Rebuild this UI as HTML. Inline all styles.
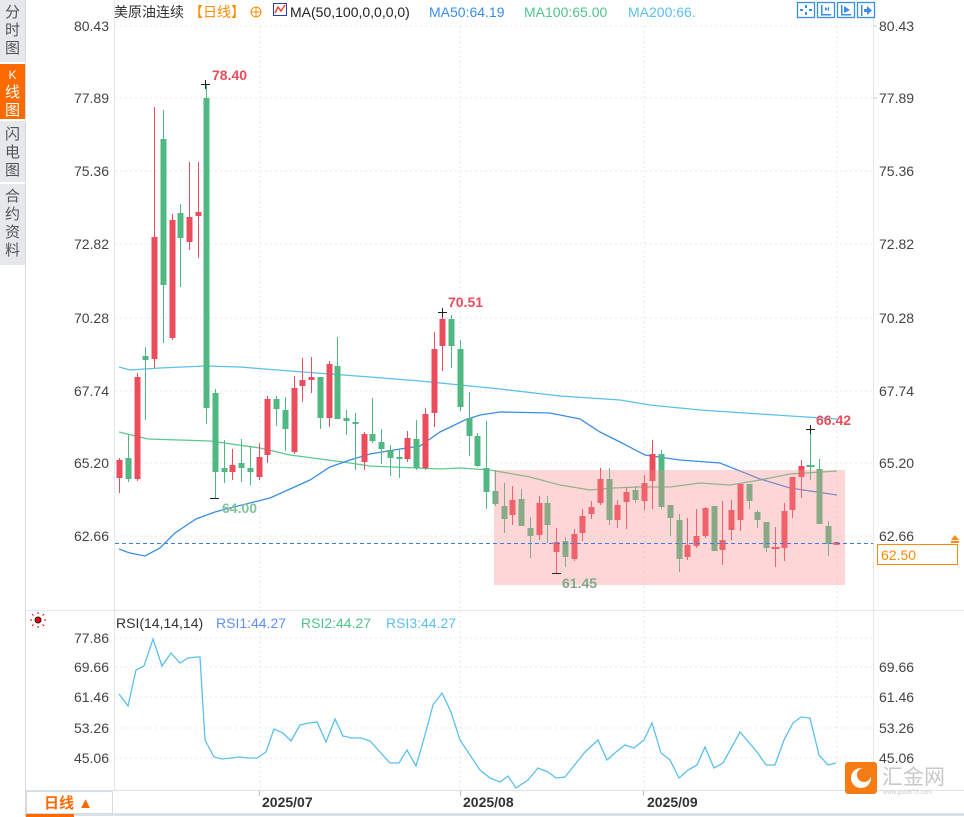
<!DOCTYPE html>
<html><head><meta charset="utf-8"><style>
html,body{margin:0;padding:0;background:#fff;width:964px;height:817px;overflow:hidden;font-family:"Liberation Sans","Noto Sans CJK SC",sans-serif}
.side{position:absolute;left:0;top:0;width:25px;height:817px;border-right:1px solid #d8dce2;background:#fff}
.tab{position:absolute;left:0;width:25px;background:#e6e8eb;color:#555;font-size:15px;line-height:18px;text-align:center;writing-mode:horizontal-tb}
.tab.on{background:#ff6a00;color:#fff}
</style></head><body>
<div class="side"></div>
<div class="tab" style="top:0;height:62px;padding-top:4px;box-sizing:border-box">分<br>时<br>图</div>
<div class="tab on" style="top:64px;height:55px;padding-top:2px;box-sizing:border-box"><span style="font-size:12px">K</span><br>线<br>图</div>
<div class="tab" style="top:121px;height:61px;padding-top:5px;box-sizing:border-box">闪<br>电<br>图</div>
<div class="tab" style="top:184px;height:81px;padding-top:4px;box-sizing:border-box">合<br>约<br>资<br>料</div>

<svg width="964" height="817" style="position:absolute;left:0;top:0" font-family="Liberation Sans, Noto Sans CJK SC, sans-serif">
<!-- frame lines -->
<line x1="114.5" y1="0" x2="114.5" y2="790" stroke="#e3e8ee"/>
<line x1="873.5" y1="0" x2="873.5" y2="790" stroke="#e3e8ee"/>
<line x1="26" y1="610.5" x2="964" y2="610.5" stroke="#e3e8ee"/>
<line x1="26" y1="790.5" x2="964" y2="790.5" stroke="#dde2e8"/>
<line x1="26" y1="814.5" x2="964" y2="814.5" stroke="#dde2e8" stroke-width="3"/>
<rect x="26" y="813" width="48" height="4" fill="#ff6a00"/>
<rect x="26.5" y="791.5" width="86" height="22" fill="#fff" stroke="#d6dbe1"/>
<text x="44" y="808" font-size="15" fill="#ff6a00" font-weight="bold">日线 ▲</text>

<!-- grid -->
<g stroke="#e4e8ed" stroke-dasharray="2,3">
<line x1="115" y1="26" x2="873" y2="26"/><line x1="115" y1="98" x2="873" y2="98"/><line x1="115" y1="171" x2="873" y2="171"/><line x1="115" y1="244" x2="873" y2="244"/><line x1="115" y1="318" x2="873" y2="318"/><line x1="115" y1="391" x2="873" y2="391"/><line x1="115" y1="463" x2="873" y2="463"/><line x1="115" y1="536" x2="873" y2="536"/>
<line x1="115" y1="638" x2="873" y2="638"/><line x1="115" y1="667" x2="873" y2="667"/><line x1="115" y1="697" x2="873" y2="697"/><line x1="115" y1="728" x2="873" y2="728"/><line x1="115" y1="758" x2="873" y2="758"/>
<line x1="260" y1="26" x2="260" y2="790"/><line x1="460" y1="26" x2="460" y2="790"/><line x1="644" y1="26" x2="644" y2="790"/><line x1="837" y1="26" x2="837" y2="790"/>
</g>

<!-- axis labels -->
<g font-size="14" fill="#444" text-anchor="end">
<text x="109" y="31">80.43</text><text x="109" y="103">77.89</text><text x="109" y="176">75.36</text><text x="109" y="249">72.82</text><text x="109" y="323">70.28</text><text x="109" y="396">67.74</text><text x="109" y="468">65.20</text><text x="109" y="541">62.66</text>
<text x="109" y="643">77.86</text><text x="109" y="672">69.66</text><text x="109" y="702">61.46</text><text x="109" y="733">53.26</text><text x="109" y="763">45.06</text>
</g>
<g font-size="14" fill="#444">
<text x="879" y="31">80.43</text><text x="879" y="103">77.89</text><text x="879" y="176">75.36</text><text x="879" y="249">72.82</text><text x="879" y="323">70.28</text><text x="879" y="396">67.74</text><text x="879" y="468">65.20</text><text x="879" y="541">62.66</text>
<text x="879" y="672">69.66</text><text x="879" y="702">61.46</text><text x="879" y="733">53.26</text><text x="879" y="763">45.06</text>
</g>
<g stroke="#ccc"><line x1="873" y1="26" x2="877" y2="26"/><line x1="873" y1="98" x2="877" y2="98"/></g>

<!-- header -->
<text x="114" y="17" font-size="14" fill="#333">美原油连续</text>
<text x="189" y="17" font-size="14" fill="#ff8a00">【日线】</text>
<circle cx="256" cy="12" r="5" fill="none" stroke="#ff8a00"/><line x1="251" y1="12" x2="261" y2="12" stroke="#ff8a00"/><line x1="256" y1="7" x2="256" y2="17" stroke="#ff8a00"/>
<rect x="273.5" y="3.5" width="13" height="12" fill="#fff" stroke="#2a3fb0"/><polyline points="275,13 278,7 281,11 285,5" fill="none" stroke="#e43" stroke-width="1.5"/>
<text x="290" y="17" font-size="14" fill="#222">MA(50,100,0,0,0,0)</text>
<text x="429" y="17" font-size="14" fill="#3a8ee6">MA50:64.19</text>
<text x="524" y="17" font-size="14" fill="#4fc48a">MA100:65.00</text>
<text x="628" y="17" font-size="14" fill="#5bc0eb">MA200:66.</text>
<g fill="#fff" stroke="#3a8ee6" stroke-width="1.3">
<rect x="797.5" y="2.5" width="17" height="15"/><rect x="817.5" y="2.5" width="17" height="15"/><rect x="837.5" y="2.5" width="17" height="15"/><rect x="857.5" y="2.5" width="17" height="15"/>
</g>
<g fill="#3a8ee6"><rect x="805" y="5" width="2" height="3"/><rect x="805" y="12" width="2" height="3"/><rect x="800" y="9" width="3" height="2"/><rect x="809" y="9" width="3" height="2"/>
<rect x="821" y="5" width="1.5" height="10"/><rect x="821" y="14" width="10" height="1.5"/><polygon points="825,7 828,9 825,11"/><rect x="828" y="7" width="1" height="4"/>
<rect x="841" y="5" width="1.5" height="10"/><rect x="841" y="14" width="10" height="1.5"/><polygon points="844,6 850,10 844,13"/>
<rect x="861" y="5" width="1.5" height="11"/><rect x="864" y="9" width="4" height="3"/><polygon points="867,6 872,10.5 867,15"/></g>

<!-- MA lines -->
<polyline fill="none" stroke="#5bc0eb" stroke-width="1.3" points="119,367 130,370 160,368 205,366 240,367 290,371 370,377 420,381 460,385 500,389 560,396 620,400 650,405 700,410 760,414 837,419"/>
<polyline fill="none" stroke="#5cc98a" stroke-width="1.3" points="119,432 148,439 210,441 260,448 290,455 343,462 370,466 440,469 460,468 490,470 530,477 560,485 590,490 613,488 640,487 670,487 700,483 730,485 760,480 790,474 837,471"/>
<polyline fill="none" stroke="#3a8ee6" stroke-width="1.3" points="119,549 130,553 145,556 160,548 175,533 196,519 215,512 230,508 270,498 310,480 330,467 350,460 370,454 400,449 420,446 440,432 465,420 480,415 500,412 550,413 580,419 600,432 620,442 645,455 680,460 720,463 760,479 790,488 837,495"/>

<!-- candles -->
<g id="c">
<g fill="#eb4d5c" stroke="#eb4d5c">
<line x1="119.5" y1="458" x2="119.5" y2="493"/><rect x="116.5" y="460" width="6" height="18" stroke="none"/>
<line x1="137.5" y1="373" x2="137.5" y2="481"/><rect x="134.5" y="377" width="6" height="102" stroke="none"/>
<line x1="154.5" y1="107" x2="154.5" y2="368"/><rect x="151.5" y="237" width="6" height="122" stroke="none"/>
<line x1="172.5" y1="214" x2="172.5" y2="340"/><rect x="169.5" y="220" width="6" height="118" stroke="none"/>
<line x1="189.5" y1="162" x2="189.5" y2="250"/><rect x="186.5" y="217" width="6" height="25" stroke="none"/>
<line x1="198.5" y1="162" x2="198.5" y2="258"/><rect x="195.5" y="212" width="6" height="4" stroke="none"/>
<line x1="232.5" y1="449" x2="232.5" y2="480"/><rect x="229.5" y="465" width="6" height="7" stroke="none"/>
<line x1="259.5" y1="443" x2="259.5" y2="480"/><rect x="256.5" y="457" width="6" height="20" stroke="none"/>
<line x1="267.5" y1="396" x2="267.5" y2="463"/><rect x="264.5" y="399" width="6" height="56" stroke="none"/>
<line x1="294.5" y1="376" x2="294.5" y2="454"/><rect x="291.5" y="388" width="6" height="64" stroke="none"/>
<line x1="302.5" y1="358" x2="302.5" y2="402"/><rect x="299.5" y="380" width="6" height="6" stroke="none"/>
<line x1="311.5" y1="357" x2="311.5" y2="393"/><rect x="308.5" y="377" width="6" height="3" stroke="none"/>
<line x1="329.5" y1="361" x2="329.5" y2="427"/><rect x="326.5" y="364" width="6" height="54" stroke="none"/>
<line x1="364.5" y1="432" x2="364.5" y2="470"/><rect x="361.5" y="434" width="6" height="28" stroke="none"/>
<line x1="407.5" y1="431" x2="407.5" y2="462"/><rect x="404.5" y="438" width="6" height="21" stroke="none"/>
<line x1="425.5" y1="408" x2="425.5" y2="470"/><rect x="422.5" y="414" width="6" height="54" stroke="none"/>
<line x1="434.5" y1="332" x2="434.5" y2="427"/><rect x="431.5" y="349" width="6" height="64" stroke="none"/>
<line x1="442.5" y1="311" x2="442.5" y2="371"/><rect x="439.5" y="319" width="6" height="27" stroke="none"/>
<line x1="512.5" y1="486" x2="512.5" y2="525"/><rect x="509.5" y="500" width="6" height="15" stroke="none"/>
<line x1="539.5" y1="496" x2="539.5" y2="540"/><rect x="536.5" y="503" width="6" height="32" stroke="none"/>
<line x1="556.5" y1="528" x2="556.5" y2="573"/><rect x="553.5" y="542" width="6" height="10" stroke="none"/>
<line x1="574.5" y1="529" x2="574.5" y2="561"/><rect x="571.5" y="534" width="6" height="25" stroke="none"/>
<line x1="582.5" y1="509" x2="582.5" y2="541"/><rect x="579.5" y="516" width="6" height="17" stroke="none"/>
<line x1="591.5" y1="501" x2="591.5" y2="519"/><rect x="588.5" y="507" width="6" height="7" stroke="none"/>
<line x1="600.5" y1="468" x2="600.5" y2="505"/><rect x="597.5" y="479" width="6" height="24" stroke="none"/>
<line x1="617.5" y1="500" x2="617.5" y2="528"/><rect x="614.5" y="505" width="6" height="15" stroke="none"/>
<line x1="626.5" y1="487" x2="626.5" y2="529"/><rect x="623.5" y="492" width="6" height="10" stroke="none"/>
<line x1="644.5" y1="475" x2="644.5" y2="510"/><rect x="641.5" y="483" width="6" height="18" stroke="none"/>
<line x1="652.5" y1="440" x2="652.5" y2="509"/><rect x="649.5" y="454" width="6" height="27" stroke="none"/>
<line x1="687.5" y1="518" x2="687.5" y2="560"/><rect x="684.5" y="545" width="6" height="12" stroke="none"/>
<line x1="696.5" y1="509" x2="696.5" y2="548"/><rect x="693.5" y="536" width="6" height="10" stroke="none"/>
<line x1="705.5" y1="507" x2="705.5" y2="538"/><rect x="702.5" y="508" width="6" height="28" stroke="none"/>
<line x1="722.5" y1="501" x2="722.5" y2="565"/><rect x="719.5" y="540" width="6" height="10" stroke="none"/>
<line x1="731.5" y1="500" x2="731.5" y2="540"/><rect x="728.5" y="510" width="6" height="20" stroke="none"/>
<line x1="740.5" y1="484" x2="740.5" y2="531"/><rect x="737.5" y="484" width="6" height="36" stroke="none"/>
<line x1="775.5" y1="527" x2="775.5" y2="567"/><rect x="771.5" y="547" width="8" height="2" stroke="none"/>
<line x1="784.5" y1="503" x2="784.5" y2="561"/><rect x="781.5" y="511" width="6" height="37" stroke="none"/>
<line x1="792.5" y1="477" x2="792.5" y2="518"/><rect x="789.5" y="477" width="6" height="33" stroke="none"/>
<line x1="801.5" y1="460" x2="801.5" y2="498"/><rect x="798.5" y="466" width="6" height="11" stroke="none"/>
<rect x="833.5" y="542" width="6" height="3" stroke="none"/>
</g>
<g fill="#4fb883" stroke="#4fb883">
<line x1="128.5" y1="435" x2="128.5" y2="482"/><rect x="125.5" y="458" width="6" height="21" stroke="none"/>
<line x1="145.5" y1="347" x2="145.5" y2="420"/><rect x="142.5" y="356" width="6" height="4" stroke="none"/>
<line x1="163.5" y1="110" x2="163.5" y2="343"/><rect x="160.5" y="139" width="6" height="146" stroke="none"/>
<line x1="180.5" y1="204" x2="180.5" y2="287"/><rect x="177.5" y="213" width="6" height="25" stroke="none"/>
<line x1="206.5" y1="84" x2="206.5" y2="424"/><rect x="203.5" y="98" width="6" height="310" stroke="none"/>
<line x1="215.5" y1="389" x2="215.5" y2="498"/><rect x="212.5" y="393" width="6" height="79" stroke="none"/>
<line x1="224.5" y1="440" x2="224.5" y2="483"/><rect x="221.5" y="468" width="6" height="4" stroke="none"/>
<line x1="241.5" y1="439" x2="241.5" y2="482"/><rect x="238.5" y="463" width="6" height="5" stroke="none"/>
<line x1="250.5" y1="446" x2="250.5" y2="485"/><rect x="247.5" y="468" width="6" height="4" stroke="none"/>
<line x1="276.5" y1="396" x2="276.5" y2="426"/><rect x="273.5" y="399" width="6" height="10" stroke="none"/>
<line x1="285.5" y1="397" x2="285.5" y2="451"/><rect x="282.5" y="410" width="6" height="19" stroke="none"/>
<line x1="320.5" y1="377" x2="320.5" y2="429"/><rect x="317.5" y="377" width="6" height="41" stroke="none"/>
<line x1="337.5" y1="337" x2="337.5" y2="419"/><rect x="334.5" y="366" width="6" height="53" stroke="none"/>
<line x1="346.5" y1="410" x2="346.5" y2="435"/><rect x="343.5" y="418" width="6" height="3" stroke="none"/>
<line x1="355.5" y1="413" x2="355.5" y2="470"/><rect x="352.5" y="422" width="6" height="2" stroke="none"/>
<line x1="372.5" y1="398" x2="372.5" y2="443"/><rect x="369.5" y="434" width="6" height="7" stroke="none"/>
<line x1="381.5" y1="429" x2="381.5" y2="464"/><rect x="378.5" y="442" width="6" height="7" stroke="none"/>
<line x1="390.5" y1="445" x2="390.5" y2="476"/><rect x="387.5" y="450" width="6" height="8" stroke="none"/>
<line x1="399.5" y1="449" x2="399.5" y2="478"/><rect x="396.5" y="457" width="6" height="2" stroke="none"/>
<line x1="416.5" y1="420" x2="416.5" y2="470"/><rect x="413.5" y="439" width="6" height="29" stroke="none"/>
<line x1="451.5" y1="315" x2="451.5" y2="368"/><rect x="448.5" y="319" width="6" height="27" stroke="none"/>
<line x1="460.5" y1="340" x2="460.5" y2="411"/><rect x="457.5" y="349" width="6" height="58" stroke="none"/>
<line x1="469.5" y1="392" x2="469.5" y2="456"/><rect x="466.5" y="418" width="6" height="18" stroke="none"/>
<line x1="477.5" y1="433" x2="477.5" y2="467"/><rect x="474.5" y="436" width="6" height="30" stroke="none"/>
<line x1="486.5" y1="421" x2="486.5" y2="509"/><rect x="483.5" y="468" width="6" height="24" stroke="none"/>
<line x1="495.5" y1="470" x2="495.5" y2="506"/><rect x="492.5" y="491" width="6" height="13" stroke="none"/>
<line x1="504.5" y1="483" x2="504.5" y2="533"/><rect x="501.5" y="506" width="6" height="13" stroke="none"/>
<line x1="521.5" y1="489" x2="521.5" y2="526"/><rect x="518.5" y="499" width="6" height="27" stroke="none"/>
<line x1="530.5" y1="517" x2="530.5" y2="558"/><rect x="527.5" y="528" width="6" height="8" stroke="none"/>
<line x1="547.5" y1="496" x2="547.5" y2="543"/><rect x="544.5" y="503" width="6" height="22" stroke="none"/>
<line x1="565.5" y1="537" x2="565.5" y2="567"/><rect x="562.5" y="541" width="6" height="16" stroke="none"/>
<line x1="609.5" y1="468" x2="609.5" y2="525"/><rect x="606.5" y="479" width="6" height="41" stroke="none"/>
<line x1="635.5" y1="486" x2="635.5" y2="503"/><rect x="632.5" y="490" width="6" height="10" stroke="none"/>
<line x1="661.5" y1="450" x2="661.5" y2="509"/><rect x="658.5" y="454" width="6" height="53" stroke="none"/>
<line x1="670.5" y1="505" x2="670.5" y2="536"/><rect x="667.5" y="505" width="6" height="13" stroke="none"/>
<line x1="679.5" y1="514" x2="679.5" y2="572"/><rect x="676.5" y="520" width="6" height="39" stroke="none"/>
<line x1="714.5" y1="506" x2="714.5" y2="551"/><rect x="711.5" y="506" width="6" height="45" stroke="none"/>
<line x1="749.5" y1="484" x2="749.5" y2="509"/><rect x="746.5" y="484" width="6" height="17" stroke="none"/>
<line x1="757.5" y1="510" x2="757.5" y2="528"/><rect x="754.5" y="512" width="6" height="8" stroke="none"/>
<line x1="766.5" y1="522" x2="766.5" y2="552"/><rect x="763.5" y="522" width="6" height="26" stroke="none"/>
<line x1="810.5" y1="429" x2="810.5" y2="480"/><rect x="806.5" y="465" width="8" height="2" stroke="none"/>
<line x1="819.5" y1="459" x2="819.5" y2="524"/><rect x="816.5" y="469" width="6" height="55" stroke="none"/>
<line x1="828.5" y1="521" x2="828.5" y2="556"/><rect x="825.5" y="526" width="6" height="18" stroke="none"/>
</g>
</g>

<!-- pink box -->
<rect x="494" y="470" width="351" height="115" fill="rgba(250,140,140,0.35)"/>

<!-- current price -->
<line x1="115" y1="543.5" x2="873" y2="543.5" stroke="#3a7fe0" stroke-dasharray="4,3"/>
<rect x="877.5" y="544.5" width="80" height="20" fill="#fff" stroke="#ff8a00"/>
<text x="881" y="560" font-size="14" fill="#ff8a00">62.50</text>
<polygon points="951,540 955,535 959,540" fill="#ff8a00"/><rect x="951" y="541" width="8" height="2" fill="#ff8a00"/>

<!-- annotations -->
<g stroke="#222"><line x1="201" y1="84.5" x2="210" y2="84.5"/><line x1="205.5" y1="80" x2="205.5" y2="89"/>
<line x1="210" y1="498.5" x2="219" y2="498.5"/><line x1="438" y1="312.5" x2="447" y2="312.5"/><line x1="442.5" y1="308" x2="442.5" y2="317"/>
<line x1="552" y1="573.5" x2="561" y2="573.5"/><line x1="806" y1="429.5" x2="815" y2="429.5"/><line x1="810.5" y1="425" x2="810.5" y2="434"/></g>
<g font-size="14" font-weight="bold">
<text x="212" y="80" fill="#eb4d5c">78.40</text>
<text x="222" y="513" fill="#7fc49a">64.00</text>
<text x="448" y="307" fill="#eb4d5c">70.51</text>
<text x="562" y="588" fill="#7fa98a">61.45</text>
<text x="816" y="425" fill="#eb4d5c">66.42</text>
</g>

<!-- RSI -->
<g stroke="#e00" stroke-width="1"><circle cx="38" cy="620" r="3" fill="#e00" stroke="#222"/>
<line x1="38" y1="612" x2="38" y2="614"/><line x1="38" y1="626" x2="38" y2="628"/><line x1="30" y1="620" x2="32" y2="620"/><line x1="44" y1="620" x2="46" y2="620"/>
<line x1="32" y1="614" x2="33.5" y2="615.5"/><line x1="44" y1="614" x2="42.5" y2="615.5"/><line x1="32" y1="626" x2="33.5" y2="624.5"/><line x1="44" y1="626" x2="42.5" y2="624.5"/></g>
<text x="116" y="628" font-size="14" fill="#333">RSI(14,14,14)</text>
<text x="216" y="628" font-size="14" fill="#5b8ff0">RSI1:44.27</text>
<text x="301" y="628" font-size="14" fill="#4fc48a">RSI2:44.27</text>
<text x="386" y="628" font-size="14" fill="#5bc0eb">RSI3:44.27</text>
<polyline fill="none" stroke="#5bc0eb" stroke-width="1.3" points="119,694 128,706 136,670 144,666 153,639 162,666 171,653 180,663 188,658 197,657 200,657 205,740 214,757 222,759 231,758 239,757 248,758 257,758 266,752 274,729 283,733 291,741 300,725 309,723 317,722 326,742 335,719 343,736 352,738 361,738 370,741 390,763 399,763 407,750 416,766 425,735 433,705 442,693 451,712 460,740 470,755 480,770 490,778 500,782 508,776 516,788 528,780 538,768 548,772 556,778 565,777 577,762 585,752 598,740 607,760 616,752 625,745 634,748 644,740 652,723 661,753 670,760 679,778 688,770 697,765 705,747 714,768 723,763 740,732 757,752 766,765 775,765 784,740 793,723 801,717 810,718 819,755 828,765 836,763"/>

<!-- dates -->
<g font-size="14" font-weight="bold" fill="#333">
<text x="262" y="807">2025/07</text><text x="463" y="807">2025/08</text><text x="647" y="807">2025/09</text>
</g>
<g stroke="#bbb"><line x1="259.5" y1="791" x2="259.5" y2="796"/><line x1="460.5" y1="791" x2="460.5" y2="796"/><line x1="643.5" y1="791" x2="643.5" y2="796"/></g>

<!-- logo -->
<rect x="845" y="762" width="32" height="32" rx="3" fill="#f57c14"/>
<circle cx="861" cy="778" r="10" fill="#fff"/><circle cx="864" cy="775" r="7" fill="#f57c14"/>
<text x="882" y="784" font-size="21" fill="#c8c8c8">汇金网</text>
<text x="883" y="794" font-size="6" fill="#ccc">www.gold678.com</text>
</svg>
</body></html>
